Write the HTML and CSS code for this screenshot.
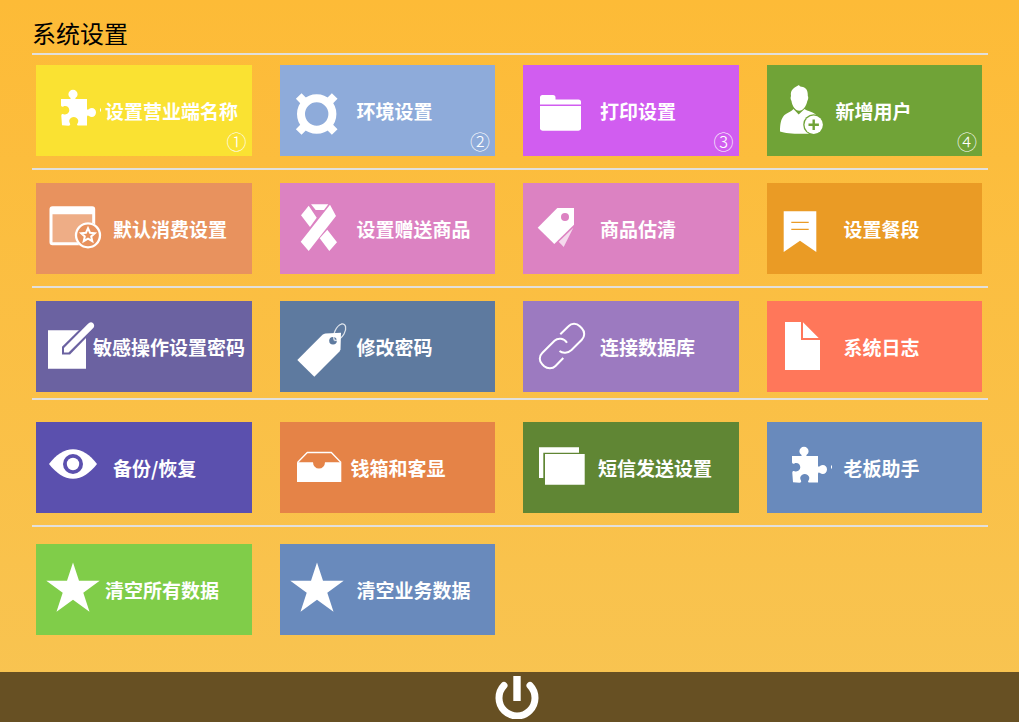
FILE: index.html
```html
<!DOCTYPE html>
<html lang="zh-CN">
<head>
  <meta charset="UTF-8">
  <meta name="viewport" content="width=device-width, initial-scale=1">
  <title>系统设置</title>
  <link rel="stylesheet" href="styles.css">
</head>
<body>
  <main class="settings">
    <h1>系统设置</h1>

    <section class="row row-first">
      <button type="button" class="tile yellow">
        <svg class="icon" width="69" height="91" viewBox="0 0 69 91" aria-hidden="true">
          <path d="M25 34H33.5C35 34 35 33.4 34 32.5A4.6 4.4 0 1 1 40 32.5C39 33.4 39 34 40.5 34H51V43.5C51 45 52 45 53 44C56 41.5 60 43.5 60 47.3C60 51.5 56 53.3 53 51C52 50 51 50.500 51 52V60.500H43C41 60.500 40.500 60 41.500 58.500A4.400 4.200 0 1 0 34 58.500C34.500 60 34 60.500 32.500 60.800L26 60.300L25.300 51C25.300 49 26.300 48.700 27.500 49.200C30.500 50.300 33.300 48 33.300 45.300C33.300 42 30 40.300 27.500 41.500C26 42 25 41.700 25 40Z"/>
          <path d="M64 43.500h1v3h-1z"/>
        </svg>
        <span>设置营业端名称</span>
        <span class="number">①</span>
      </button>
      <button type="button" class="tile sky">
        <svg class="icon" width="77" height="91" viewBox="0 0 77 91" aria-hidden="true">
          <g class="line" stroke-width="8">
            <circle cx="36.700" cy="49" r="15.700"/>
            <path d="M18.700 31L25 37.300M54.700 31L48.400 37.300M18.700 67L25 60.700M54.700 67L48.400 60.700"/>
          </g>
        </svg>
        <span>环境设置</span>
        <span class="number">②</span>
      </button>
      <button type="button" class="tile violet">
        <svg class="icon" width="77" height="91" viewBox="0 0 77 91" aria-hidden="true">
          <path d="M17 39.500V32.500Q17 30 19.500 30H30Q32.500 30 32.500 32.500V34.500H55.500Q58 34.500 58 37V39.500Z"/>
          <path d="M17 41H58V63.300Q58 65.700 55.500 65.700H19.500Q17 65.700 17 63.300Z"/>
        </svg>
        <span>打印设置</span>
        <span class="number">③</span>
      </button>
      <button type="button" class="tile green">
        <svg class="icon" width="69" height="91" viewBox="0 0 69 91" aria-hidden="true">
          <path d="M32 20C32.500 21.500 34 21.500 36 22C39.500 23 41 26 40.800 31C41.800 32 41 35 40.300 36C39.500 41 36 45.700 32.300 45.700C28.500 45.700 25 41 24.500 36C23.500 34.500 23.300 32.500 24 31C23 25 27 22.500 32 20Z"/>
          <path d="M26.500 44L31.700 49.500L37.500 44C40 46 47 47 50.500 51L51 60L47 68C37 69.500 20 69 13 66.500C13 59 14 54 17 50.500C19 48.300 24 47 26.500 44Z"/>
          <circle class="cut" cx="46.700" cy="59.700" r="10.500"/>
          <circle cx="46.700" cy="59.700" r="9.200"/>
          <path class="cut" d="M45.500 54.500h2.400v4h4v2.400h-4v4h-2.400v-4h-4v-2.400h4z"/>
        </svg>
        <span>新增用户</span>
        <span class="number">④</span>
      </button>
    </section>

    <section class="row">
      <button type="button" class="tile salmon">
        <svg class="icon" width="77" height="91" viewBox="0 0 77 91" aria-hidden="true">
          <rect x="15" y="25" width="43" height="36" rx="1" fill-opacity=".25"/>
          <rect class="line" x="15" y="24.700" width="42.700" height="36" rx="1.500" stroke-width="3"/>
          <path d="M14 25h45v6.300H14z"/>
          <circle class="cut" cx="52" cy="52.300" r="13"/>
          <circle class="line" cx="52" cy="52.300" r="12" stroke-width="2.300"/>
          <path class="line" stroke-width="2" d="M52 45.200L54 49.700L58.800 50.200L55.200 53.400L56.300 58.200L52 55.700L47.700 58.200L48.800 53.400L45.200 50.200L50 49.700Z"/>
        </svg>
        <span>默认消费设置</span>
      </button>
      <button type="button" class="tile pink">
        <svg class="icon" width="77" height="91" viewBox="0 0 77 91" aria-hidden="true">
          <path d="M31 21.300H48.300L44 27H35.700ZM28.700 22.700L21 32.300L30 44L36.700 34.700ZM50 21.700L56 33L28.700 68L20.700 58.700ZM47.300 46.700L57 59.300L49.300 68L39.700 55.300Z"/>
        </svg>
        <span>设置赠送商品</span>
      </button>
      <button type="button" class="tile pink">
        <svg class="icon" width="77" height="91" viewBox="0 0 77 91" aria-hidden="true">
          <path d="M34.300 25H51V41.700L31.300 61L14.700 44.700Z"/>
          <circle class="cut" cx="42" cy="34" r="4"/>
          <path d="M50.300 44.700L35.700 58.700L40.700 64Z" fill-opacity=".7"/>
        </svg>
        <span>商品估清</span>
      </button>
      <button type="button" class="tile amber">
        <svg class="icon" width="77" height="91" viewBox="0 0 77 91" aria-hidden="true">
          <path d="M16.700 28.300H49.300V69L33 57.700L16.700 69Z"/>
          <path class="cut" d="M24.300 38.700h17.400v1.300H24.300zM24.300 45.700h17.400v1.300H24.300z"/>
        </svg>
        <span>设置餐段</span>
      </button>
    </section>

    <section class="row row-tight">
      <button type="button" class="tile plum">
        <svg class="icon" width="57" height="91" viewBox="0 0 57 91" aria-hidden="true">
          <path d="M12 29.300H50V67.700H12Z"/>
          <path class="cut" d="M26 45.700L43.500 28.500L51 29L51 36L34 53.500H26Z"/>
          <path d="M28 47L51.800 23Q54.500 20 57.200 22.200Q59.500 25 56.500 27.800L32.500 51.500H28Z"/>
        </svg>
        <span>敏感操作设置密码</span>
      </button>
      <button type="button" class="tile steel">
        <svg class="icon" width="77" height="91" viewBox="0 0 77 91" aria-hidden="true">
          <path d="M17.300 59L42.500 33.700Q43.700 32.700 45.500 32.500L61 31.700L60.500 48.500L59.500 50.500L34.300 75.700Z"/>
          <circle class="cut" cx="53" cy="39.700" r="3.800"/>
          <path class="line" stroke-width="1.300" stroke-opacity=".8" d="M54.500 39.500C52 34 56 25 61.500 23C66 22 67 28 64 33C62 36.500 58.500 39.500 54.500 39.500"/>
        </svg>
        <span>修改密码</span>
      </button>
      <button type="button" class="tile lavender">
        <svg class="icon" width="77" height="91" viewBox="0 0 77 91" aria-hidden="true">
          <g class="line" stroke-width="2">
            <path d="M37.300 33.300L45.500 25.200C48.500 22 53.500 22 56.800 25.200L58.800 27.200C62 30.500 62 35.500 58.800 38.800L48.500 49C45 52.300 39.500 52.500 36.500 50"/>
            <path d="M44 41.700C41 37 35 36.500 31.500 39.700L19.200 52C16 55 16 60.500 19.200 63.300L21.200 65.300C24.500 68 29.500 68 32.500 65L40.300 57"/>
          </g>
        </svg>
        <span>连接数据库</span>
      </button>
      <button type="button" class="tile coral">
        <svg class="icon" width="77" height="91" viewBox="0 0 77 91" aria-hidden="true">
          <path d="M18 21H34V39H53V69H18ZM36 21.300L51.700 37H36Z"/>
        </svg>
        <span>系统日志</span>
      </button>
    </section>

    <section class="row row-roomy">
      <button type="button" class="tile indigo">
        <svg class="icon" width="77" height="91" viewBox="0 0 77 91" aria-hidden="true">
          <path d="M13 42C20 33 28 27.300 37 27.300S54 33 61 42C54 51 46 56.700 37 56.700S20 51 13 42Z"/>
          <circle class="cut" cx="37" cy="42" r="10"/>
          <circle cx="37" cy="42" r="6.200"/>
        </svg>
        <span>备份/恢复</span>
      </button>
      <button type="button" class="tile orange">
        <svg class="icon" width="71" height="91" viewBox="0 0 71 91" aria-hidden="true">
          <path class="line" stroke-width="1.300" d="M17.500 40.500L27.300 30.500H51.300L61 40.500"/>
          <path d="M17 40.300H33A6 6.300 0 0 0 45 40.300H61.300V60H17Z"/>
        </svg>
        <span>钱箱和客显</span>
      </button>
      <button type="button" class="tile olive">
        <svg class="icon" width="75" height="91" viewBox="0 0 75 91" aria-hidden="true">
          <path d="M16 25.300H56V30.700H20.300V56H16ZM22 32H61.700V62.700H22Z"/>
        </svg>
        <span>短信发送设置</span>
      </button>
      <button type="button" class="tile blue">
        <svg class="icon" width="77" height="91" viewBox="0 0 77 91" aria-hidden="true">
          <path d="M25 34H33.500C35 34 35 33.400 34 32.500A4.600 4.400 0 1 1 40 32.500C39 33.400 39 34 40.500 34H51V43.500C51 45 52 45 53 44C56 41.500 60 43.500 60 47.300C60 51.500 56 53.300 53 51C52 50 51 50.500 51 52V60.500H43C41 60.500 40.500 60 41.500 58.500A4.400 4.200 0 1 0 34 58.500C34.500 60 34 60.500 32.500 60.800L26 60.300L25.300 51C25.300 49 26.300 48.700 27.500 49.200C30.500 50.300 33.300 48 33.300 45.300C33.300 42 30 40.300 27.500 41.500C26 42 25 41.700 25 40Z"/>
          <path d="M64 43.500h1v3h-1z"/>
        </svg>
        <span>老板助手</span>
      </button>
    </section>

    <section class="row row-last">
      <button type="button" class="tile lime">
        <svg class="icon" width="69" height="91" viewBox="0 0 69 91" aria-hidden="true">
          <path d="M37 18.500L43 36.700H63.700L47.300 48.700L53.500 67.700L37 55.700L20.500 67.700L26.700 48.700L10.300 36.700H31Z"/>
        </svg>
        <span>清空所有数据</span>
      </button>
      <button type="button" class="tile blue">
        <svg class="icon" width="77" height="91" viewBox="0 0 77 91" aria-hidden="true">
          <path d="M37 18.500L43 36.700H63.700L47.300 48.700L53.500 67.700L37 55.700L20.500 67.700L26.700 48.700L10.300 36.700H31Z"/>
        </svg>
        <span>清空业务数据</span>
      </button>
    </section>
  </main>

  <footer class="footer">
    <button type="button" class="power" aria-label="退出">
      <svg width="44" height="44" viewBox="0 0 44 44" aria-hidden="true">
        <path class="line" stroke-width="7" stroke-linecap="round" d="M9 10.500A18 18 0 1 0 35 10.500"/>
        <path d="M18.300 1h7.400v25h-7.400z"/>
      </svg>
    </button>
  </footer>
</body>
</html>
```
FILE: styles.css
```css
* {
  box-sizing: border-box;
}
body {
  margin: 0;
  min-height: 100vh;
  display: flex;
  flex-direction: column;
  font-family: "Noto Sans CJK SC", sans-serif;
  background: linear-gradient(#fdbb37, #f8c452);
}
.settings {
  flex: 1;
  padding: 13px 31px 0 32px;
}
h1 {
  margin: 0;
  font-size: 24px;
  line-height: 40px;
  font-weight: 400;
  color: #000;
}
.row {
  display: grid;
  grid-template-columns: repeat(4, 1fr);
  gap: 28px;
  padding: 13px 6px 12px 4px;
  border-top: 2px solid #e2e0dc;
}
.row-first {
  padding-top: 10px;
}
.row-tight {
  padding-bottom: 6px;
}
.row-roomy {
  padding-top: 22px;
}
.row-last {
  padding-top: 17px;
}
.tile {
  --tile: #698abc;
  position: relative;
  display: flex;
  align-items: center;
  min-width: 0;
  height: 91px;
  padding: 0;
  border: none;
  background: var(--tile);
  color: #fff;
  font-family: inherit;
  font-size: 19px;
  font-weight: 700;
  line-height: 28px;
  white-space: nowrap;
  cursor: pointer;
}
.number {
  position: absolute;
  right: 5px;
  bottom: 0;
  font-size: 20px;
  font-weight: 300;
}

/* icons */
svg {
  display: block;
  fill: #fff;
}
.icon {
  flex: none;
  overflow: visible;
}
.line {
  fill: none;
  stroke: #fff;
}
.cut {
  fill: var(--tile);
}

/* tile colors */
.yellow { --tile: #fae232; }
.sky { --tile: #8eabda; }
.violet { --tile: #d15df0; }
.green { --tile: #70a337; }
.salmon { --tile: #e8925e; }
.pink { --tile: #dc82c2; }
.amber { --tile: #ea9b25; }
.plum { --tile: #6b62a1; }
.steel { --tile: #5e7a9f; }
.lavender { --tile: #9c7ac0; }
.coral { --tile: #ff775a; }
.indigo { --tile: #5b50ae; }
.orange { --tile: #e58347; }
.olive { --tile: #608634; }
.blue { --tile: #698abc; }
.lime { --tile: #80cd49; }

.footer {
  display: flex;
  justify-content: center;
  align-items: center;
  height: 50px;
  padding-left: 14px;
  background: #675023;
}
.power {
  padding: 0;
  border: none;
  background: none;
  cursor: pointer;
}
```
